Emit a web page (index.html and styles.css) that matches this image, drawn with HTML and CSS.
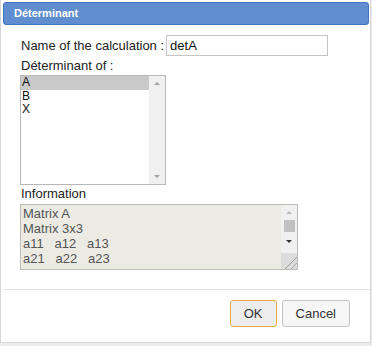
FILE: index.html
```html
<!DOCTYPE html>
<html lang="en">
  <head>
    <meta charset="UTF-8">
    <title>Déterminant</title>
    <link rel="stylesheet" href="styles.css">
  </head>
  <body>
    <div class="dialog">
      <div class="titlebar">Déterminant</div>
      <div class="content">
        <div class="name-row">
          <span>Name of the calculation :</span>
          <div class="text-input">detA</div>
        </div>
        <div class="label">Déterminant of :</div>
        <div class="listbox">
          <div class="list-items">
            <div class="item selected">A</div>
            <div class="item">B</div>
            <div class="item">X</div>
          </div>
          <div class="vscroll">
            <span class="arrow up"></span>
            <span class="arrow down"></span>
          </div>
        </div>
        <div class="label info-label">Information</div>
        <div class="infobox">
          <div class="info-text">
            Matrix A<br>
            Matrix 3x3<br>
            a11&nbsp;&nbsp; a12&nbsp;&nbsp; a13<br>
            a21&nbsp;&nbsp; a22&nbsp;&nbsp; a23
          </div>
          <div class="vscroll dark">
            <span class="arrow up"></span>
            <span class="thumb"></span>
            <span class="arrow down"></span>
            <span class="grip"></span>
          </div>
        </div>
      </div>
      <div class="buttons">
        <button class="btn ok">OK</button>
        <button class="btn">Cancel</button>
      </div>
    </div>
  </body>
</html>
```

FILE: styles.css
```css
body {
  margin: 0;
  background: #ececec;
  font-family: 'Liberation Sans', Arial, sans-serif;
  color: #333;
}

.dialog {
  width: 371px;
  height: 343px;
  background: #fff;
  border: 1px solid #d6d6d6;
  border-top: none;
  box-sizing: border-box;
  display: flex;
  flex-direction: column;
}

.titlebar {
  margin: 2px 1px 0 2px;
  height: 23px;
  background: #5f8dcf;
  border: 1px solid #3f73c4;
  border-radius: 3px;
  box-sizing: border-box;
  color: #fff;
  font-weight: bold;
  font-size: 11px;
  line-height: 21px;
  padding-left: 10px;
}

.content {
  padding: 10px 0 0 17px;
  height: 265px;
  box-sizing: border-box;
  border-bottom: 1px solid #e2e2e2;
  margin: 0 0 0 2px;
}

.name-row {
  display: flex;
  align-items: center;
  font-size: 13px;
  color: #222;
  padding-left: 1px;
}

.text-input {
  margin-left: 2px;
  width: 162px;
  height: 21px;
  border: 1px solid #c4c4c4;
  box-sizing: border-box;
  padding-left: 3px;
  line-height: 19px;
  color: #111;
}

.label {
  font-size: 13px;
  color: #222;
  margin-top: 1px;
  line-height: 18px;
  padding-left: 1px;
}

.listbox {
  width: 146px;
  height: 110px;
  border: 1px solid #b8b8b8;
  box-sizing: border-box;
  display: flex;
}

.list-items {
  flex: 1;
  font-size: 12px;
  color: #111;
}

.item {
  height: 13.5px;
  line-height: 13px;
  padding-left: 1px;
}

.item.selected {
  background: #c9c9c9;
}

.vscroll {
  width: 16px;
  background: #f0f0f0;
  display: flex;
  flex-direction: column;
  align-items: center;
  justify-content: space-between;
  padding: 6px 0;
  box-sizing: border-box;
}

.arrow {
  width: 0;
  height: 0;
  border-left: 3px solid transparent;
  border-right: 3px solid transparent;
}

.arrow.up {
  border-bottom: 3px solid #a3a3a3;
}

.arrow.down {
  border-top: 3px solid #a3a3a3;
}

.info-label {
  margin-top: 0;
  margin-bottom: 1px;
}

.infobox {
  width: 278px;
  height: 66px;
  border: 1px solid #bdbdb5;
  box-sizing: border-box;
  background: #ebebe4;
  display: flex;
}

.info-text {
  flex: 1;
  font-size: 13px;
  line-height: 15px;
  color: #555;
  padding: 1px 0 0 2px;
  overflow: hidden;
  white-space: nowrap;
}

.vscroll.dark {
  padding: 6px 0 0 0;
  justify-content: flex-start;
  position: relative;
}

.vscroll.dark .arrow.up {
  border-bottom-color: #bbb;
}

.vscroll.dark .thumb {
  margin-top: 6px;
  width: 11px;
  height: 12px;
  background: #c1c1c1;
}

.vscroll.dark .arrow.down {
  margin-top: 8px;
  border-top-color: #333;
}

.vscroll.dark .grip {
  position: absolute;
  bottom: 0;
  left: 0;
  width: 16px;
  height: 16px;
  background: linear-gradient(135deg, #dcdcdc 60%, #999 62%, #dcdcdc 66%, #dcdcdc 78%, #999 80%, #dcdcdc 84%);
}

.buttons {
  display: flex;
  justify-content: flex-end;
  gap: 5px;
  padding: 10px 20px 0 0;
}

.btn {
  font-family: 'Liberation Sans', Arial, sans-serif;
  font-size: 13px;
  color: #333;
  height: 27px;
  padding: 0 13px;
  background: #f6f6f6;
  border: 1px solid #c5c5c5;
  border-radius: 3px;
}

.btn.ok {
  background: #ededed;
  border-color: #e8a94a;
}
```
